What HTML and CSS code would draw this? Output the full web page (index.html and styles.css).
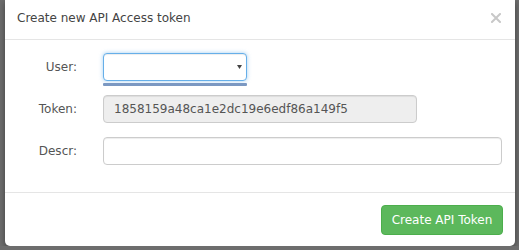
FILE: index.html
```html
<!DOCTYPE html>
<html lang="en">
<head>
  <meta charset="UTF-8" />
  <meta name="viewport" content="width=device-width, initial-scale=1.0"/>
  <title>Create new API Access token</title>
  <link rel="stylesheet" href="styles.css">
</head>
<body>

  <div id="modal">
    <div class="modal-header">
      <h4 class="modal-title">Create new API Access token</h4>
      <button type="button" class="close" aria-label="Close">
        <svg width="10" height="10" viewBox="0 0 10 10">
          <path d="M1 1 L9 9 M9 1 L1 9" stroke="#c8c8c8" stroke-width="2" stroke-linecap="square"/>
        </svg>
      </button>
    </div>

    <form class="modal-body">
      <div class="form-row">
        <label for="user">User:</label>
        <div class="select-wrap">
          <select id="user"><option value=""></option></select>
          <svg class="caret" width="5" height="4" viewBox="0 0 5 4">
            <path d="M0 0 L5 0 L2.5 4 Z" fill="#444"/>
          </svg>
        </div>
      </div>

      <div class="form-row">
        <label for="token">Token:</label>
        <input type="text" id="token" class="token-input" value="1858159a48ca1e2dc19e6edf86a149f5" readonly>
      </div>

      <div class="form-row">
        <label for="descr">Descr:</label>
        <input type="text" id="descr" class="descr-input">
      </div>
    </form>

    <div class="modal-footer">
      <button type="submit" class="btn-success">Create API Token</button>
    </div>
  </div>

</body>
</html>
```

FILE: styles.css
```css
body {
  margin: 0;
  background-color: #6d6d6d;
  font-family: "DejaVu Sans", Verdana, sans-serif;
  font-size: 12px;
  color: #333;
}

#modal {
  margin: 0 4px 0 5px;
  background: #ffffff;
  border-radius: 0 0 5px 5px;
  box-shadow: 0 2px 6px rgba(0, 0, 0, 0.4);
}

.modal-header {
  display: flex;
  align-items: flex-start;
  justify-content: space-between;
  height: 40px;
  box-sizing: border-box;
  padding: 10px 14px 0 12px;
  border-bottom: 1px solid #e5e5e5;
}

.modal-title {
  margin: 0;
  font-size: 12px;
  font-weight: normal;
  line-height: 17px;
  color: #444;
}

.close {
  background: none;
  border: none;
  padding: 0;
  margin-top: 3px;
  cursor: pointer;
  line-height: 0;
}

.modal-body {
  display: flex;
  flex-direction: column;
  gap: 14px;
  padding: 13px 13px 27px 12px;
  margin: 0;
}

.form-row {
  display: flex;
  align-items: center;
  height: 28px;
}

label {
  width: 60px;
  margin-right: 26px;
  text-align: right;
  color: #555;
  line-height: 17px;
}

.select-wrap {
  position: relative;
  width: 144px;
  height: 28px;
}

.select-wrap::after {
  content: "";
  position: absolute;
  left: 0;
  right: 0;
  top: 30px;
  height: 3px;
  background-color: #7b98c2;
  border-radius: 1px;
}

select {
  appearance: none;
  -webkit-appearance: none;
  width: 100%;
  height: 28px;
  box-sizing: border-box;
  border: 1px solid #66afe9;
  border-radius: 4px;
  background: #ffffff;
  box-shadow: inset 0 1px 1px rgba(0, 0, 0, 0.075), 0 0 4px rgba(102, 175, 233, 0.6);
  outline: none;
  font: inherit;
}

.caret {
  position: absolute;
  right: 5px;
  top: 12px;
}

input {
  height: 28px;
  box-sizing: border-box;
  border: 1px solid #ccc;
  border-radius: 4px;
  padding: 0 10px;
  font: inherit;
  color: #555;
  box-shadow: inset 0 1px 1px rgba(0, 0, 0, 0.075);
}

.token-input {
  width: 314px;
  background-color: #eeeeee;
}

.descr-input {
  width: 399px;
  background-color: #ffffff;
}

.modal-footer {
  display: flex;
  justify-content: flex-end;
  padding: 12px 12px 11px;
  border-top: 1px solid #e5e5e5;
}

.btn-success {
  width: 122px;
  height: 30px;
  background-color: #5cb85c;
  border: 1px solid #4cae4c;
  border-radius: 4px;
  color: #ffffff;
  font: inherit;
  cursor: pointer;
}
```
